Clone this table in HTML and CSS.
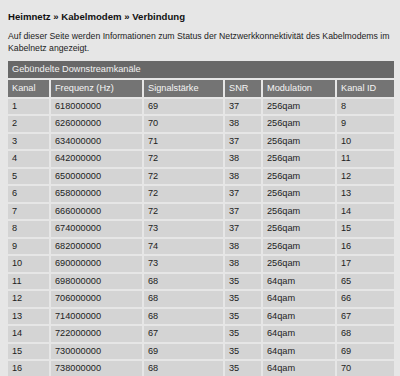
FILE: index.html
```html
<!DOCTYPE html>
<html lang="de">
<head>
<meta charset="utf-8">
<link rel="stylesheet" href="styles.css">
</head>
<body>
<h1 class="title">Heimnetz » Kabelmodem » Verbindung</h1>
<p class="intro">Auf dieser Seite werden Informationen zum Status der Netzwerkkonnektivität des Kabelmodems im Kabelnetz angezeigt.</p>
<table class="grid">
<colgroup>
<col class="c1"><col class="c2"><col class="c3"><col class="c4"><col class="c5"><col class="c6">
</colgroup>
<thead>
<tr><th class="cap" colspan="6">Gebündelte Downstreamkanäle</th></tr>
<tr class="head"><th>Kanal</th><th>Frequenz (Hz)</th><th>Signalstärke</th><th>SNR</th><th>Modulation</th><th>Kanal ID</th></tr>
</thead>
<tbody>
<tr><td>1</td><td>618000000</td><td>69</td><td>37</td><td>256qam</td><td>8</td></tr>
<tr><td>2</td><td>626000000</td><td>70</td><td>38</td><td>256qam</td><td>9</td></tr>
<tr><td>3</td><td>634000000</td><td>71</td><td>37</td><td>256qam</td><td>10</td></tr>
<tr><td>4</td><td>642000000</td><td>72</td><td>38</td><td>256qam</td><td>11</td></tr>
<tr><td>5</td><td>650000000</td><td>72</td><td>38</td><td>256qam</td><td>12</td></tr>
<tr><td>6</td><td>658000000</td><td>72</td><td>37</td><td>256qam</td><td>13</td></tr>
<tr><td>7</td><td>666000000</td><td>72</td><td>37</td><td>256qam</td><td>14</td></tr>
<tr><td>8</td><td>674000000</td><td>73</td><td>37</td><td>256qam</td><td>15</td></tr>
<tr><td>9</td><td>682000000</td><td>74</td><td>38</td><td>256qam</td><td>16</td></tr>
<tr><td>10</td><td>690000000</td><td>73</td><td>38</td><td>256qam</td><td>17</td></tr>
<tr><td>11</td><td>698000000</td><td>68</td><td>35</td><td>64qam</td><td>65</td></tr>
<tr><td>12</td><td>706000000</td><td>68</td><td>35</td><td>64qam</td><td>66</td></tr>
<tr><td>13</td><td>714000000</td><td>68</td><td>35</td><td>64qam</td><td>67</td></tr>
<tr><td>14</td><td>722000000</td><td>67</td><td>35</td><td>64qam</td><td>68</td></tr>
<tr><td>15</td><td>730000000</td><td>69</td><td>35</td><td>64qam</td><td>69</td></tr>
<tr><td>16</td><td>738000000</td><td>68</td><td>35</td><td>64qam</td><td>70</td></tr>
</tbody>
</table>
</body>
</html>
```
FILE: styles.css
```css
html, body {
  background: #e6e6e6;
}
body {
  margin: 0;
  padding: 11px 2px 0 8px;
  font-family: "Liberation Sans", Arial, sans-serif;
  color: #1a1a1a;
}
.title {
  margin: 0;
  font-size: 9.6px;
  line-height: 11px;
  font-weight: bold;
  color: #111;
}
.intro {
  margin: 8px 0 0 0;
  font-size: 8.7px;
  line-height: 12px;
  color: #222;
}
.grid {
  margin-top: 5px;
  width: 390px;
  table-layout: fixed;
  border-collapse: separate;
  border-spacing: 2px;
  margin-left: -2px;
  font-size: 9.2px;
}
.c1 { width: 41px; }
.c2 { width: 91px; }
.c3 { width: 79px; }
.c4 { width: 36px; }
.c5 { width: 72px; }
.grid th, .grid td {
  text-align: left;
  font-weight: normal;
  padding: 2px 3px 2px 4px;
  line-height: 11.5px;
  white-space: nowrap;
}
.grid .cap {
  background: #686868;
  color: #f2f2f2;
  padding: 2.5px 3px 2.5px 4px;
}
.grid .head th {
  background: #747474;
  color: #f4f4f4;
  padding: 3px 3px 2.5px 4px;
}
.grid td {
  background: #d4d4d4;
  color: #1c1c1c;
}
```
